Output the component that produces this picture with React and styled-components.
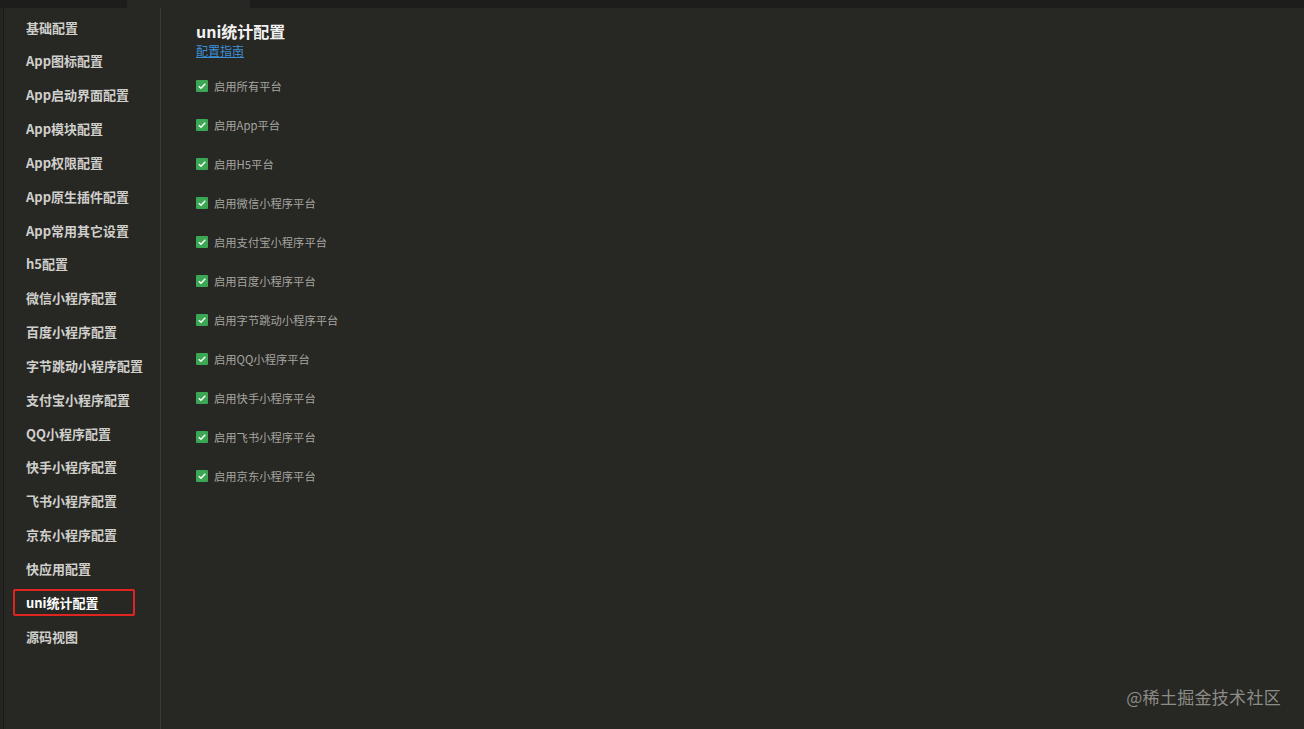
import styled, { createGlobalStyle } from "styled-components";

const GlobalStyle = createGlobalStyle`
    html, body {
        margin: 0;
        padding: 0;
        background: #272723;
    }
    body {
        font-family: "Noto Sans CJK SC", "Noto Sans", sans-serif;
    }
`;

const menu = [
    "基础配置",
    "App图标配置",
    "App启动界面配置",
    "App模块配置",
    "App权限配置",
    "App原生插件配置",
    "App常用其它设置",
    "h5配置",
    "微信小程序配置",
    "百度小程序配置",
    "字节跳动小程序配置",
    "支付宝小程序配置",
    "QQ小程序配置",
    "快手小程序配置",
    "飞书小程序配置",
    "京东小程序配置",
    "快应用配置",
    "uni统计配置",
    "源码视图",
];

const platforms = [
    "启用所有平台",
    "启用App平台",
    "启用H5平台",
    "启用微信小程序平台",
    "启用支付宝小程序平台",
    "启用百度小程序平台",
    "启用字节跳动小程序平台",
    "启用QQ小程序平台",
    "启用快手小程序平台",
    "启用飞书小程序平台",
    "启用京东小程序平台",
];

function App() {
    return (
        <Page>
            <GlobalStyle />
            <TabStrip>
                <Tab $width={127} />
                <Tab $active $width={123} />
                <Tab $width={1054} />
            </TabStrip>
            <Body>
                <EdgeRail />
                <Sidebar>
                    {menu.map((item) => (
                        <MenuItem key={item} $active={item === "uni统计配置"}>
                            {item}
                        </MenuItem>
                    ))}
                </Sidebar>
                <Content>
                    <Title>uni统计配置</Title>
                    <Guide href="#">配置指南</Guide>
                    <List>
                        {platforms.map((p) => (
                            <Row key={p}>
                                <Check>
                                    <svg width="12" height="12" viewBox="0 0 12 12">
                                        <path
                                            d="M2.8 6.2 L5 8.3 L9.3 3.8"
                                            fill="none"
                                            stroke="#ffffff"
                                            strokeWidth="1.5"
                                        />
                                    </svg>
                                </Check>
                                <Label>{p}</Label>
                            </Row>
                        ))}
                    </List>
                </Content>
            </Body>
            <Watermark>@稀土掘金技术社区</Watermark>
        </Page>
    );
}

const Page = styled.div`
    position: relative;
    width: 1304px;
    height: 729px;
    overflow: hidden;
    display: flex;
    flex-direction: column;
    background: #272723;
`;

const TabStrip = styled.div`
    display: flex;
    height: 8px;
    flex-shrink: 0;
    background: #1d1d1b;
`;

const Tab = styled.div`
    width: ${(p) => p.$width}px;
    height: 8px;
    background: ${(p) => (p.$active ? "#272724" : "#1d1d1b")};
`;

const Body = styled.div`
    flex: 1;
    display: flex;
`;

const EdgeRail = styled.div`
    width: 3px;
    border-right: 1px solid #1a1a18;
    background: #242421;
`;

const Sidebar = styled.nav`
    width: 156px;
    border-right: 1px solid #3a3a35;
    padding-top: 5.5px;
    display: flex;
    flex-direction: column;
`;

const MenuItem = styled.div`
    height: 27px;
    margin: 0 25px 6.85px 9px;
    padding-left: 11px;
    display: flex;
    align-items: center;
    flex-shrink: 0;
    font-size: 13px;
    font-weight: 700;
    color: ${(p) => (p.$active ? "#ffffff" : "#cfcfcb")};
    border: 2px solid ${(p) => (p.$active ? "#e0241f" : "transparent")};
    border-radius: 2px;
    box-sizing: border-box;
    white-space: nowrap;
`;

const Content = styled.main`
    flex: 1;
    padding: 12px 0 0 35px;
    display: flex;
    flex-direction: column;
`;

const Title = styled.h1`
    margin: 0;
    font-size: 16px;
    font-weight: 700;
    line-height: 22px;
    color: #f2f2f2;
`;

const Guide = styled.a`
    align-self: flex-start;
    font-size: 12px;
    line-height: 16px;
    margin-top: 1px;
    color: #3c8fd6;
    text-decoration: underline;
`;

const List = styled.div`
    margin-top: 17px;
    display: flex;
    flex-direction: column;
`;

const Row = styled.label`
    height: 39px;
    display: flex;
    align-items: flex-start;
    padding-top: 2px;
    box-sizing: border-box;
    gap: 6px;
`;

const Check = styled.span`
    width: 12px;
    height: 12px;
    margin-top: 2px;
    border-radius: 1px;
    background: #3ba755;
    display: inline-flex;
`;

const Label = styled.span`
    font-size: 11.3px;
    line-height: 16px;
    color: #a5a5a0;
`;

const Watermark = styled.div`
    position: absolute;
    right: 23px;
    bottom: 20px;
    font-size: 17px;
    color: #8c8c88;
    letter-spacing: 0.3px;
`;

export default App;
